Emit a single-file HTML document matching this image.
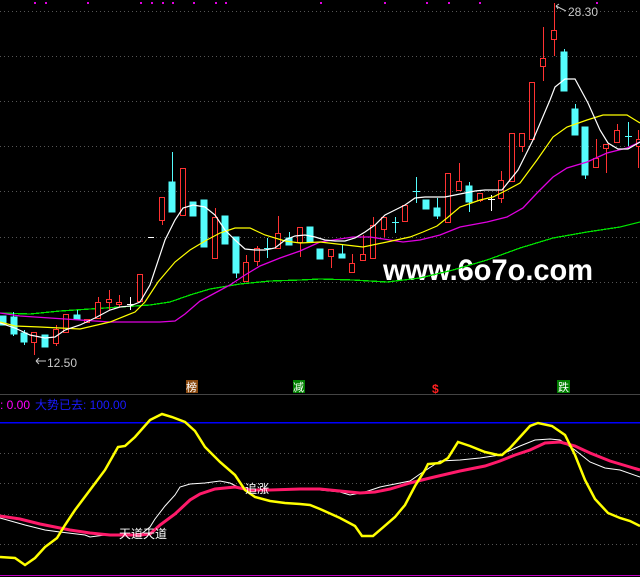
<!DOCTYPE html>
<html><head><meta charset="utf-8"><style>
html,body{margin:0;padding:0;background:#000;width:640px;height:577px;overflow:hidden}
svg{display:block}
text{font-family:"Liberation Sans","Noto Sans CJK SC",sans-serif}
</style></head><body>
<svg width="640" height="577" viewBox="0 0 640 577" xmlns="http://www.w3.org/2000/svg" shape-rendering="crispEdges">
<rect width="640" height="577" fill="#000"/>
<g stroke="#555" stroke-dasharray="1,3" stroke-width="1">
<line x1="0" y1="11.5" x2="640" y2="11.5"/><line x1="0" y1="56.5" x2="640" y2="56.5"/><line x1="0" y1="101.5" x2="640" y2="101.5"/><line x1="0" y1="146.5" x2="640" y2="146.5"/><line x1="0" y1="191.5" x2="640" y2="191.5"/><line x1="0" y1="237.5" x2="640" y2="237.5"/><line x1="0" y1="282.5" x2="640" y2="282.5"/>
<line x1="0" y1="453.5" x2="640" y2="453.5"/><line x1="0" y1="483.5" x2="640" y2="483.5"/><line x1="0" y1="514.5" x2="640" y2="514.5"/><line x1="0" y1="544.5" x2="640" y2="544.5"/>
</g>
<g fill="#e000e0">
<rect x="34" y="2" width="2" height="2"/><rect x="45" y="2" width="2" height="2"/><rect x="87" y="2" width="2" height="2"/><rect x="140" y="2" width="2" height="2"/><rect x="151" y="2" width="2" height="2"/><rect x="162" y="2" width="2" height="2"/><rect x="172" y="2" width="2" height="2"/><rect x="193" y="2" width="2" height="2"/><rect x="215" y="2" width="2" height="2"/><rect x="225" y="2" width="2" height="2"/><rect x="320" y="2" width="2" height="2"/><rect x="384" y="2" width="2" height="2"/><rect x="426" y="2" width="2" height="2"/><rect x="448" y="2" width="2" height="2"/><rect x="479" y="2" width="2" height="2"/><rect x="596" y="2" width="2" height="2"/>
</g>
<!-- MA60 green -->
<polyline fill="none" stroke="#00e000" stroke-width="1.3" points="0,313 30,314 60,311 90,309 120,307 150,305 170,302 190,295 210,289 240,284 270,281 300,280 320,279 353,280 387,282 420,278 453,270 487,260 520,248 553,238 587,232 620,227 640,222"/>
<!-- cyan candles -->
<g fill="#54fcfc" stroke="#54fcfc">
<rect x="0" y="316" width="6" height="9"/><line x1="13.5" y1="312" x2="13.5" y2="336"/><rect x="11" y="317" width="6" height="17"/>
<rect x="21" y="333" width="6" height="9"/><line x1="24.5" y1="330" x2="24.5" y2="345"/>
<rect x="42" y="335" width="6" height="12"/>
<line x1="77.5" y1="310" x2="77.5" y2="319"/><rect x="74" y="315" width="6" height="4"/>
<line x1="130.5" y1="297" x2="130.5" y2="310" stroke="#fff"/><line x1="127" y1="304.5" x2="134" y2="304.5" stroke="#fff"/>
<line x1="148" y1="237.5" x2="154" y2="237.5" stroke="#fff"/>
<line x1="172.5" y1="152" x2="172.5" y2="212"/><rect x="169" y="182" width="6" height="30"/>
<rect x="190" y="202" width="6" height="14"/>
<rect x="201" y="200" width="6" height="47"/>
<rect x="222" y="216" width="6" height="28"/>
<line x1="236.5" y1="237" x2="236.5" y2="278"/><rect x="233" y="237" width="6" height="36"/>
<line x1="267.5" y1="238" x2="267.5" y2="258"/><line x1="264" y1="248.5" x2="271" y2="248.5"/>
<line x1="289.5" y1="232" x2="289.5" y2="245"/><rect x="286" y="238" width="6" height="7"/>
<rect x="307" y="227" width="6" height="15"/>
<rect x="317" y="249" width="6" height="10"/>
<line x1="342.5" y1="244" x2="342.5" y2="258"/><rect x="339" y="254" width="6" height="4"/>
<line x1="395.5" y1="217" x2="395.5" y2="233"/><line x1="392" y1="222.5" x2="399" y2="222.5"/>
<line x1="416.5" y1="177" x2="416.5" y2="203"/><line x1="413" y1="191.5" x2="420" y2="191.5"/>
<rect x="423" y="200" width="6" height="9"/>
<line x1="437.5" y1="198" x2="437.5" y2="219"/><rect x="434" y="208" width="6" height="8"/>
<line x1="469.5" y1="182" x2="469.5" y2="212"/><rect x="466" y="186" width="6" height="16"/>
<line x1="491.5" y1="195" x2="491.5" y2="211" stroke="#fff"/><line x1="488" y1="199.5" x2="495" y2="199.5" stroke="#fff"/>
<line x1="564.5" y1="49" x2="564.5" y2="91"/><rect x="561" y="52" width="6" height="39"/>
<line x1="575.5" y1="104" x2="575.5" y2="135"/><rect x="572" y="109" width="6" height="26"/>
<line x1="585.5" y1="127" x2="585.5" y2="179"/><rect x="582" y="127" width="6" height="48"/>
<line x1="628.5" y1="122" x2="628.5" y2="146"/><line x1="625" y1="136.5" x2="632" y2="136.5"/>
</g>
<!-- red candles -->
<g fill="#000" stroke="#ff3232">
<line x1="34.5" y1="332" x2="34.5" y2="355"/><rect x="31.5" y="332.5" width="5" height="10"/>
<line x1="56.5" y1="325" x2="56.5" y2="346"/><rect x="53.5" y="329.5" width="5" height="14"/>
<rect x="63.5" y="314.5" width="5" height="18"/>
<rect x="84.5" y="319.5" width="5" height="3"/>
<line x1="98.5" y1="297" x2="98.5" y2="319"/><rect x="95.5" y="302.5" width="5" height="16"/>
<line x1="109.5" y1="290" x2="109.5" y2="310"/><rect x="106.5" y="299.5" width="5" height="3"/>
<line x1="119.5" y1="295" x2="119.5" y2="307"/><rect x="116.5" y="302.5" width="5" height="2"/>
<rect x="137.5" y="274.5" width="5" height="27"/>
<line x1="162.5" y1="197" x2="162.5" y2="225"/><rect x="159.5" y="197.5" width="5" height="23"/>
<rect x="180.5" y="168.5" width="5" height="47"/>
<line x1="215.5" y1="208" x2="215.5" y2="259"/><rect x="212.5" y="217.5" width="5" height="41"/>
<line x1="246.5" y1="255" x2="246.5" y2="282"/><rect x="243.5" y="262.5" width="5" height="19"/>
<line x1="257.5" y1="246" x2="257.5" y2="266"/><rect x="254.5" y="248.5" width="5" height="13"/>
<line x1="278.5" y1="216" x2="278.5" y2="249"/><rect x="275.5" y="233.5" width="5" height="15"/>
<line x1="300.5" y1="227" x2="300.5" y2="257"/><rect x="297.5" y="227.5" width="5" height="15"/>
<line x1="331.5" y1="249" x2="331.5" y2="268"/><rect x="328.5" y="249.5" width="5" height="7"/>
<line x1="352.5" y1="254" x2="352.5" y2="273"/><rect x="349.5" y="263.5" width="5" height="9"/>
<line x1="363.5" y1="235" x2="363.5" y2="261"/><rect x="360.5" y="254.5" width="5" height="6"/>
<line x1="373.5" y1="217" x2="373.5" y2="259"/><rect x="370.5" y="225.5" width="5" height="33"/>
<line x1="384.5" y1="217" x2="384.5" y2="237"/><rect x="381.5" y="217.5" width="5" height="12"/>
<rect x="402.5" y="205.5" width="5" height="16"/>
<rect x="445.5" y="173.5" width="5" height="49"/>
<line x1="459.5" y1="163" x2="459.5" y2="191"/><rect x="456.5" y="181.5" width="5" height="9"/>
<line x1="480.5" y1="193" x2="480.5" y2="202"/><rect x="477.5" y="193.5" width="5" height="7"/>
<line x1="501.5" y1="171" x2="501.5" y2="203"/><rect x="498.5" y="180.5" width="5" height="18"/>
<rect x="509.5" y="133.5" width="5" height="48"/>
<line x1="522.5" y1="133" x2="522.5" y2="152"/><rect x="519.5" y="133.5" width="5" height="13"/>
<rect x="529.5" y="82.5" width="5" height="57"/>
<line x1="543.5" y1="27" x2="543.5" y2="81"/><rect x="540.5" y="58.5" width="5" height="8"/>
<line x1="554.5" y1="3" x2="554.5" y2="56"/><rect x="551.5" y="30.5" width="5" height="9"/>
<line x1="596.5" y1="139" x2="596.5" y2="168"/><rect x="593.5" y="158.5" width="5" height="9"/>
<line x1="606.5" y1="144" x2="606.5" y2="173"/><rect x="603.5" y="144.5" width="5" height="4"/>
<line x1="617.5" y1="124" x2="617.5" y2="143"/><rect x="614.5" y="130.5" width="5" height="12"/>
<line x1="638.5" y1="130" x2="638.5" y2="168"/><rect x="636.5" y="139.5" width="5" height="7"/>
</g>
<g fill="none" shape-rendering="auto">
<polyline stroke="#e000e0" stroke-width="1.3" points="0,313 20,316 50,318 80,320 110,322 140,322 160,322 175,321 185,314 200,301 215,293 230,285 245,275 260,266 280,258 300,251 320,242 353,237 370,237 390,240 403,242 420,240 440,235 460,227 487,222 507,217 523,208 537,193 553,177 567,168 587,162 607,153 627,148 640,142"/>
<polyline stroke="#ffff00" stroke-width="1.2" points="0,322 15,326 40,327 80,329 110,322 135,312 145,302 158,282 175,262 190,250 205,241 220,233 235,228 250,228 265,235 285,241 300,243 320,242 363,247 387,242 410,237 423,232 437,226 447,218 460,207 480,200 493,197 507,190 520,183 537,160 553,137 567,127 587,120 603,115 627,115 640,123"/>
<polyline stroke="#ffffff" stroke-width="1.2" points="0,323 15,328 30,335 45,338 55,337 65,330 80,325 95,318 110,310 120,307 130,306 140,302 150,285 165,240 175,220 183,208 193,205 205,207 215,215 225,230 235,240 245,249 255,250 265,250 275,248 285,240 295,236 305,235 315,237 325,240 335,241 345,241 355,238 365,232 375,225 385,215 395,210 405,205 415,198 425,197 435,197 445,197 455,195 465,193 475,191 485,190 495,190 502,190 518,170 533,140 550,100 555,87 565,79 575,79 588,103 600,130 608,143 618,149 628,149 640,142"/>
</g>
<text x="383" y="280" fill="#fff" font-size="30" font-weight="bold" textLength="210" lengthAdjust="spacingAndGlyphs">www.6o7o.com</text>
<polyline fill="none" stroke="#00e000" stroke-width="1.3" points="387,282 420,278 453,270 487,260 520,248" />
<!-- price labels -->
<g fill="#c0c0c0" stroke="none">
<text x="568" y="16" font-size="12" fill="#c8c8c8">28.30</text>
<text x="47" y="367" font-size="12" fill="#c8c8c8">12.50</text>
</g>
<g stroke="#c8c8c8" fill="none" shape-rendering="auto">
<path d="M556 6 L566 11 M556 6 L559 4 M556 6 L558 9"/>
<path d="M36 361 L46 361 M36 361 L39 358 M36 361 L39 364"/>
</g>
<!-- signal boxes -->
<rect x="186" y="380" width="12" height="13" fill="#8b4a10"/><text x="186" y="391" font-size="11" fill="#fff">榜</text>
<rect x="293" y="380" width="12" height="13" fill="#008000"/><text x="293" y="391" font-size="11" fill="#fff">减</text>
<text x="432" y="393" font-size="12" font-weight="bold" fill="#ff2020">$</text>
<rect x="557" y="380" width="13" height="13" fill="#008000"/><text x="558" y="391" font-size="11" fill="#fff">跌</text>
<line x1="0" y1="394.5" x2="640" y2="394.5" stroke="#444" stroke-width="1"/>
<!-- indicator panel -->
<text x="0" y="409" font-size="12" fill="#ff00ff">: 0.00</text>
<text x="35" y="409" font-size="12" fill="#1a1aff">大势已去: 100.00</text>
<line x1="0" y1="422.5" x2="640" y2="422.5" stroke="#0000ff" stroke-width="1.5"/>
<line x1="0" y1="575.5" x2="640" y2="575.5" stroke="#c000c0" stroke-width="1"/>
<g fill="none" shape-rendering="auto">
<polyline stroke="#ffffff" stroke-width="1" points="0,518 25,525 45,530 60,532 85,535 90,537 105,535 140,535 150,527 155,519 165,506 175,495 180,487 190,484 205,483 220,481 230,483 240,488 255,491 270,490 320,490 340,492 350,495 365,492 380,487 395,484 410,481 420,474 440,461 460,460 480,458 500,455 520,446 535,440 550,439 560,440 575,450 590,462 605,468 620,470 640,477"/>
<polyline stroke="#ff1a6a" stroke-width="3" points="0,516 20,519 40,524 55,527 70,530 90,533 110,535 140,535 150,534 160,525 175,514 190,500 200,494 215,489 225,488 235,487 250,490 270,490 300,489 320,489 340,491 360,493 375,492 390,489 410,483 430,478 460,471 485,466 500,461 515,455 530,450 545,443 560,442 575,446 590,453 610,461 630,467 640,470"/>
<polyline stroke="#ffff00" stroke-width="2.5" points="0,557 15,558 25,565 35,558 45,547 57,538 65,525 75,510 90,490 105,470 118,447 125,446 135,437 150,420 162,414 172,417 185,422 195,431 205,447 220,462 235,475 245,490 255,497 270,501 285,503 300,504 310,505 320,509 340,518 355,526 362,536 373,536 395,517 405,505 415,486 425,470 428,464 440,463 448,458 458,442 470,446 485,452 498,455 502,455 510,448 520,437 530,426 538,423 552,426 565,435 575,455 585,480 595,499 608,513 620,518 630,521 640,526"/>
</g>
<text x="119" y="538" font-size="12" fill="#fff">天道天道</text>
<text x="245" y="493" font-size="12" fill="#fff">追涨</text>
</svg>
</body></html>
